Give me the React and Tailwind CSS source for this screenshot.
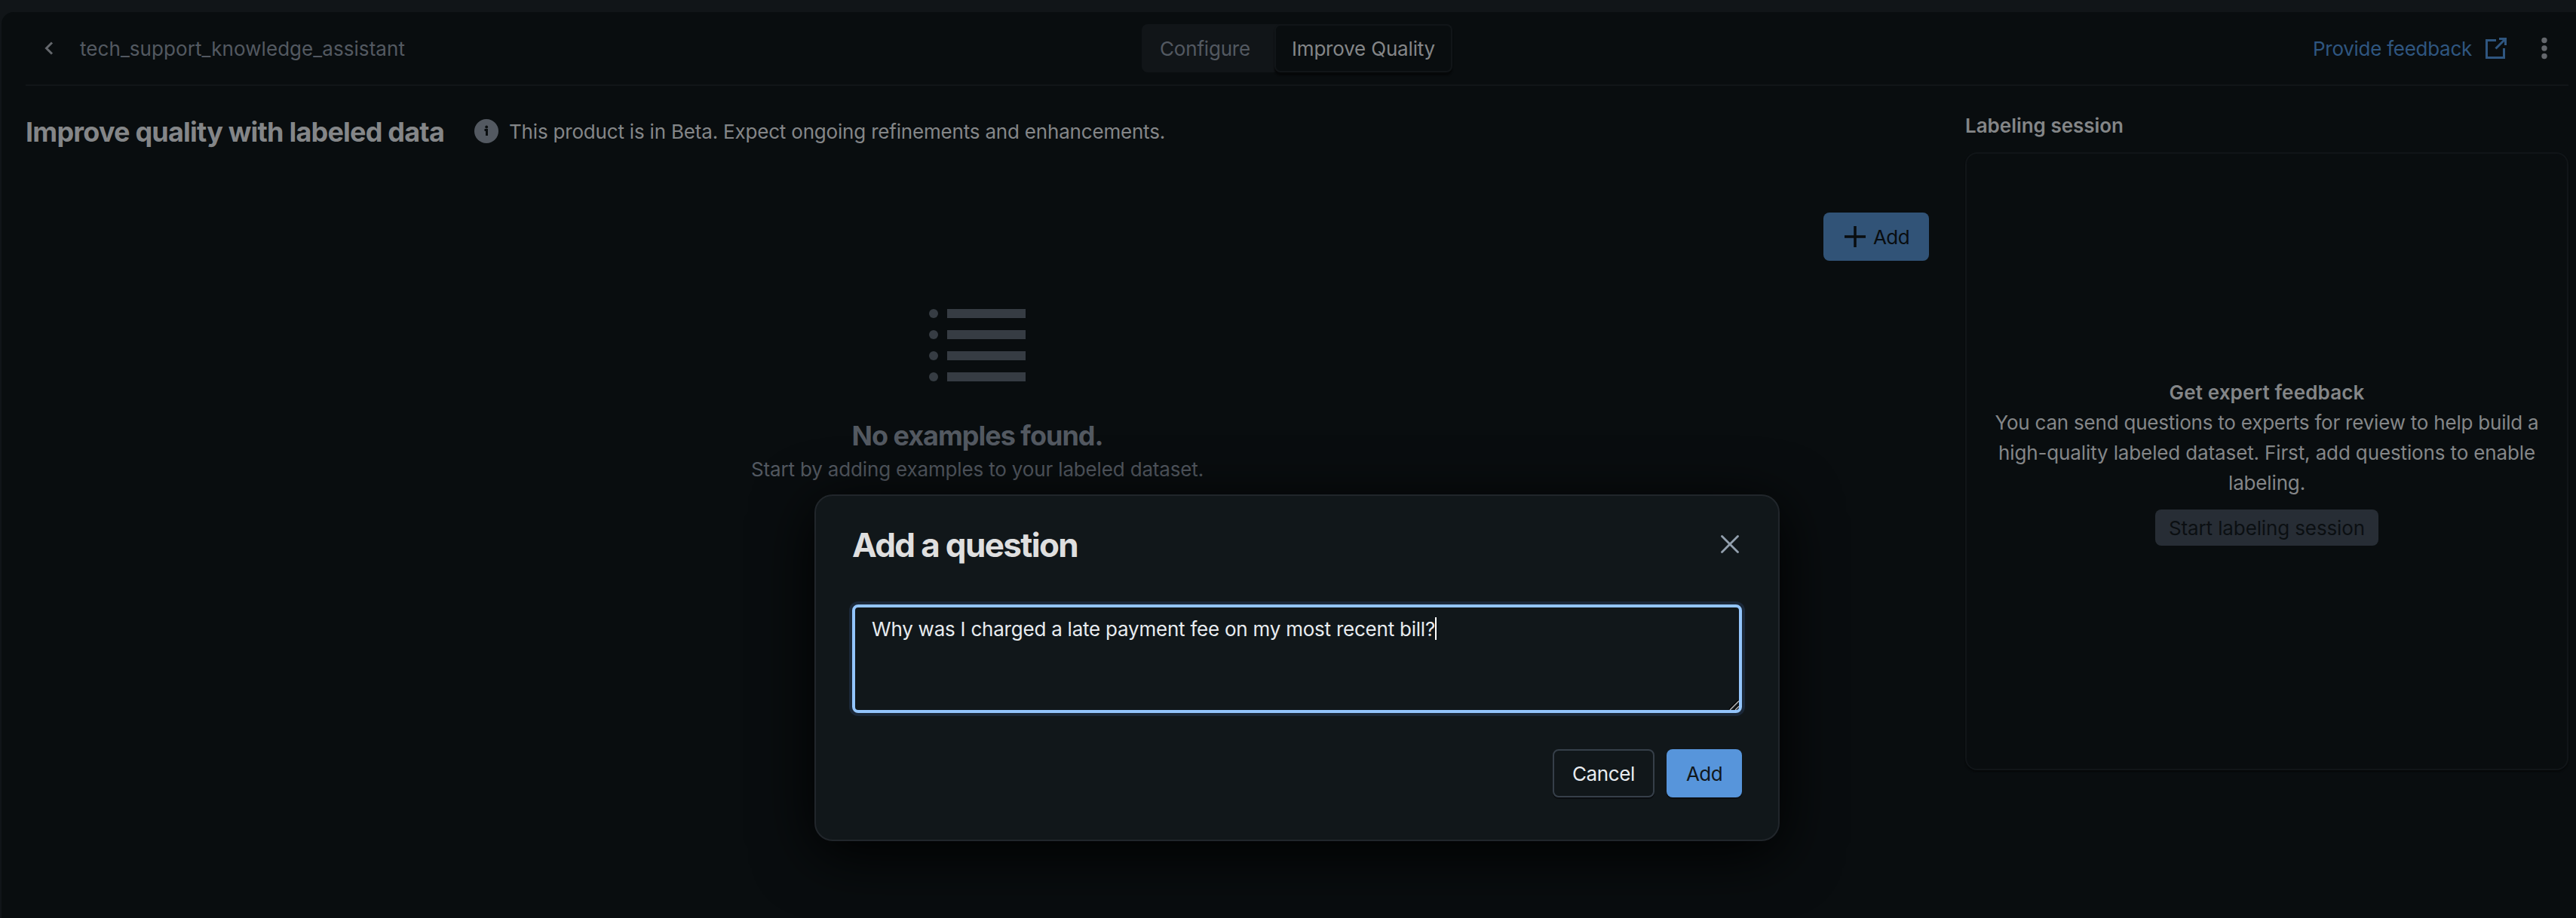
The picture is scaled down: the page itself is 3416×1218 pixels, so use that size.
import { useRef, useLayoutEffect } from "react";

// Text that is tracked so that it fills a given width.
function T({ w, className = "", children }) {
  const ref = useRef(null);
  useLayoutEffect(() => {
    const el = ref.current;
    el.style.letterSpacing = "0px";
    const natural = el.getBoundingClientRect().width;
    el.style.letterSpacing = `${(w - natural) / children.length}px`;
  }, [w, children]);
  return (
    <span className={`-mb-px inline-block pt-px whitespace-pre ${className}`}>
      <span ref={ref} className="inline-block">{children}</span>
    </span>
  );
}

export default function App() {
  return (
    <div className="relative h-[1218px] w-[3416px] overflow-hidden bg-[#111518] pt-4 pl-[2px] font-['Inter',sans-serif] text-[26px] leading-10 text-[#848688]">
      <div className="flex h-full flex-col rounded-tl-[16px] bg-[#090d0f] pr-[10px] pl-8">
        <header className="flex h-[98px] shrink-0 items-center justify-between border-b-2 border-[#111518]">
          <div className="flex w-[1480px] items-center text-[#535961]">
            <svg className="ml-[22px] h-8 w-[20px]" viewBox="0 0 20 32" fill="none" stroke="#64676c" strokeWidth="3">
              <path d="M13 8.5 5.5 16 13 23.5" />
            </svg>
            <T w={431} className="ml-[30px]">tech_support_knowledge_assistant</T>
          </div>
          <div className="flex h-16 rounded-lg bg-[#111518]">
            <div className="flex w-[176px] items-center pl-6 text-[#535961]"><T w={120}>Configure</T></div>
            <div className="flex w-[236px] items-center rounded-lg border-2 border-[#111518] bg-[#090d0f] pl-[21px] shadow-[0_4px_2px_#060809]"><T w={190}>Improve Quality</T></div>
          </div>
          <div className="flex w-[1480px] items-center justify-end text-[#2f5680]">
            <T w={211}>Provide feedback</T>
            <svg className="mr-8 ml-4 size-8" viewBox="0 0 32 32" fill="none" stroke="currentColor" strokeWidth="3">
              <path d="M16 5.5H3.5v23h23V16M20 3.5h8.500v8.500M28 4 15.500 16.500" />
            </svg>
            <svg className="mr-4 h-8 w-8" viewBox="0 0 32 32" fill="#64676c">
              <circle cx="16" cy="5.500" r="3.700" /><circle cx="16" cy="16" r="3.700" /><circle cx="16" cy="26.500" r="3.700" />
            </svg>
          </div>
        </header>
        <div className="flex">
          <main className="w-[2524px]">
            <div className="flex h-[112px] items-center pt-[8px]">
              <T w={555} className="text-[36px] font-bold">Improve quality with labeled data</T>
              <svg className="ml-10 size-8" viewBox="0 0 32 32">
                <circle cx="16" cy="16" r="16" fill="#535961" />
                <path d="M13.500 14.500h3V22" fill="none" stroke="#090d0f" strokeWidth="3" />
                <circle cx="16.200" cy="10.500" r="1.900" fill="#090d0f" />
              </svg>
              <T w={870} className="ml-[14px]">This product is in Beta. Expect ongoing refinements and enhancements.</T>
            </div>
            <div className="flex h-[120px] items-end justify-end">
              <button className="flex h-16 w-[140px] items-center rounded-lg bg-[#315377] pl-[26px] text-[#090d0f]">
                <svg className="size-8" viewBox="0 0 32 32" stroke="currentColor" strokeWidth="3.500"><path d="M16 2v28M2 16h28" /></svg>
                <T w={48} className="ml-2">Add</T>
              </button>
            </div>
            <div className="flex flex-col items-center pt-16 text-[#535961]">
              <svg className="h-[96px] w-[128px]" viewBox="0 0 128 96" fill="#363c43">
                <circle cx="6" cy="6" r="6" /><rect x="24" width="104" height="12" />
                <circle cx="6" cy="34" r="6" /><rect x="24" y="28" width="104" height="12" />
                <circle cx="6" cy="62" r="6" /><rect x="24" y="56" width="104" height="12" />
                <circle cx="6" cy="90" r="6" /><rect x="24" y="84" width="104" height="12" />
              </svg>
              <T w={333} className="mt-[49px] text-[36px] leading-[44px] font-bold">No examples found.</T>
              <T w={600} className="mt-[3px]">Start by adding examples to your labeled dataset.</T>
            </div>
          </main>
          <aside className="ml-[48px] flex-1">
            <div className="flex h-[88px] items-end pb-4"><T w={210} className="font-semibold">Labeling session</T></div>
            <section className="flex h-[820px] flex-col items-center justify-center rounded-2xl border-2 border-[#111518] shadow-[0_2px_2px_#060809]">
              <T w={259} className="font-semibold">Get expert feedback</T>
              <T w={721}>You can send questions to experts for review to help build a</T>
              <T w={712}>high-quality labeled dataset. First, add questions to enable</T>
              <T w={102}>labeling.</T>
              <button className="mt-4 flex h-12 w-[296px] items-center justify-center rounded-lg bg-[#272d35] text-[#0b0f12]"><T w={260}>Start labeling session</T></button>
            </section>
          </aside>
        </div>
      </div>

      <div className="absolute top-[656px] left-[1080px] h-[460px] w-[1280px] rounded-[24px] border-2 border-[#21262b] bg-[#11171a] px-12 shadow-[0_16px_80px_#000000]">
        <div className="flex h-[144px] items-center justify-between pb-4">
          <T w={299} className="text-[44px] font-bold text-[#dfdfdf]">Add a question</T>
          <svg className="mr-[2px] size-7" viewBox="0 0 28 28" stroke="#93a0ae" strokeWidth="2.800" strokeLinecap="round"><path d="M3.500 3.500l21 21M24.500 3.500l-21 21" /></svg>
        </div>
        <div className="relative flex h-[144px] w-[1180px] rounded-lg border-4 border-[#93c5fb] pt-2 pl-[22px] text-[#e8ecf0] ring-4 ring-[#1b2838]">
          <T w={747}>Why was I charged a late payment fee on my most recent bill?</T>
          <span className="mt-[5px] h-[30px] w-[2px] bg-white" />
          <svg className="absolute right-0 bottom-0 size-[13px]" viewBox="0 0 13 13" strokeWidth="1.500">
            <path d="M0 12 12 0M6.500 13 13 6.500" stroke="#000" /><path d="M1 13 13 1M8 13l5-5" stroke="#b8b8b8" />
          </svg>
        </div>
        <div className="mt-12 flex justify-end gap-4">
          <button className="flex h-16 w-[135px] items-center justify-center rounded-lg border-2 border-[#363f49] text-[#e8ecf0] shadow-[0_2px_0_#0a0d10]"><T w={83}>Cancel</T></button>
          <button className="flex h-16 w-[100px] items-center justify-center rounded-lg bg-[#5795db] text-[#11171a] shadow-[0_2px_0_#0a0d10]"><T w={48}>Add</T></button>
        </div>
      </div>
    </div>
  );
}
